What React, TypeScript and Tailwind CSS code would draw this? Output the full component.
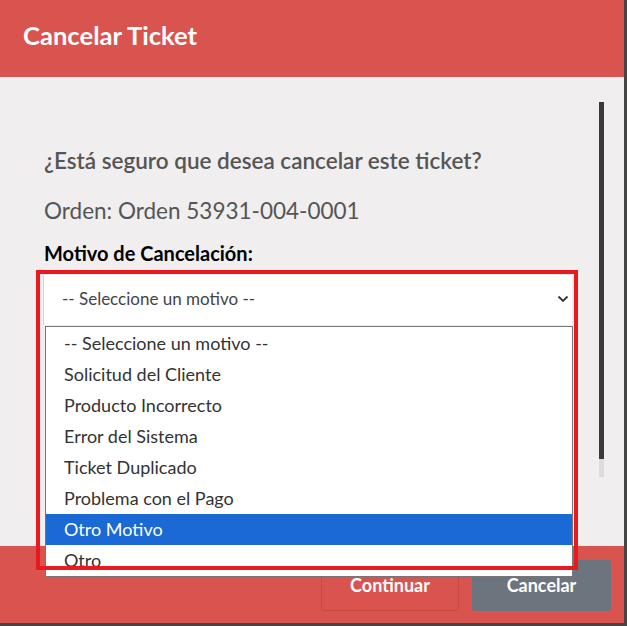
import React from "react";

const motivos = [
  "-- Seleccione un motivo --",
  "Solicitud del Cliente",
  "Producto Incorrecto",
  "Error del Sistema",
  "Ticket Duplicado",
  "Problema con el Pago",
  "Otro Motivo",
  "Otro",
];

export default function App() {
  const selected = 6;

  return (
    <div
      className="relative w-[627px] h-[626px] bg-[#454545] overflow-hidden"
      style={{ fontFamily: "Lato, 'Open Sans', sans-serif" }}
    >
      <div className="flex flex-col w-[624px] h-[623px]">
        {/* header */}
        <div className="h-[77px] bg-[#d9534f] flex items-center pl-[23px] pb-[5px]">
          <h1 className="text-white font-bold text-[25.6px] leading-none">Cancelar Ticket</h1>
        </div>

        {/* body */}
        <div className="relative flex-1 bg-[#f0eeef] pl-[44px] pt-[70px]">
          <p className="text-[22.5px] leading-[28px] font-semibold text-[#555]">
            ¿Está seguro que desea cancelar este ticket?
          </p>
          <p className="mt-[22px] text-[22.5px] leading-[28px] text-[#555]">
            Orden: Orden 53931-004-0001
          </p>
          <label className="block mt-[16px] text-[20px] leading-[24px] font-bold text-black">
            Motivo de Cancelación:
          </label>
          <div className="mt-[10px] -ml-[1px] w-[529px] h-[50px] bg-white border-l border-[#d4d4d4] flex items-center justify-between pl-[18px] pr-[3px] pb-[3px]">
            <span className="text-[17px] text-[#444]">-- Seleccione un motivo --</span>
            <svg width="12" height="8" viewBox="0 0 12 8" fill="none">
              <path d="M1.5 1.5 6 6l4.5-4.5" stroke="#333" strokeWidth="1.8" />
            </svg>
          </div>

          {/* scrollbar */}
          <div className="absolute left-[599px] top-[25px] w-[5px] flex flex-col">
            <div className="h-[357px] bg-[#3a3a3a]" />
            <div className="h-[18px] bg-[#dcdcdc]" />
          </div>
        </div>

        {/* footer */}
        <div className="h-[77px] bg-[#d9534f] flex justify-end gap-[13px] pt-[14px] pr-[13px]">
          <button className="w-[138px] h-[51px] rounded-[3px] border border-[#c94843] text-white font-bold text-[18px]">
            Continuar
          </button>
          <button className="w-[139px] h-[51px] rounded-[3px] bg-[#6c757d] text-white font-bold text-[18px]">
            Cancelar
          </button>
        </div>
      </div>

      {/* open dropdown list */}
      <div className="absolute left-[45px] top-[326px] w-[528px] h-[251px] bg-white border border-[#767676] pt-px overflow-hidden">
        {motivos.map((m, i) => (
          <div
            key={m}
            className={
              "h-[31px] flex items-center pl-[18px] text-[18px] " +
              (i === selected ? "bg-[#1a69d4] text-white" : "text-[#333]")
            }
          >
            {m}
          </div>
        ))}
      </div>

      {/* highlight box */}
      <div className="absolute left-[36px] top-[270px] w-[542px] h-[300px] border-4 border-[#e8191f] pointer-events-none" />
    </div>
  );
}
